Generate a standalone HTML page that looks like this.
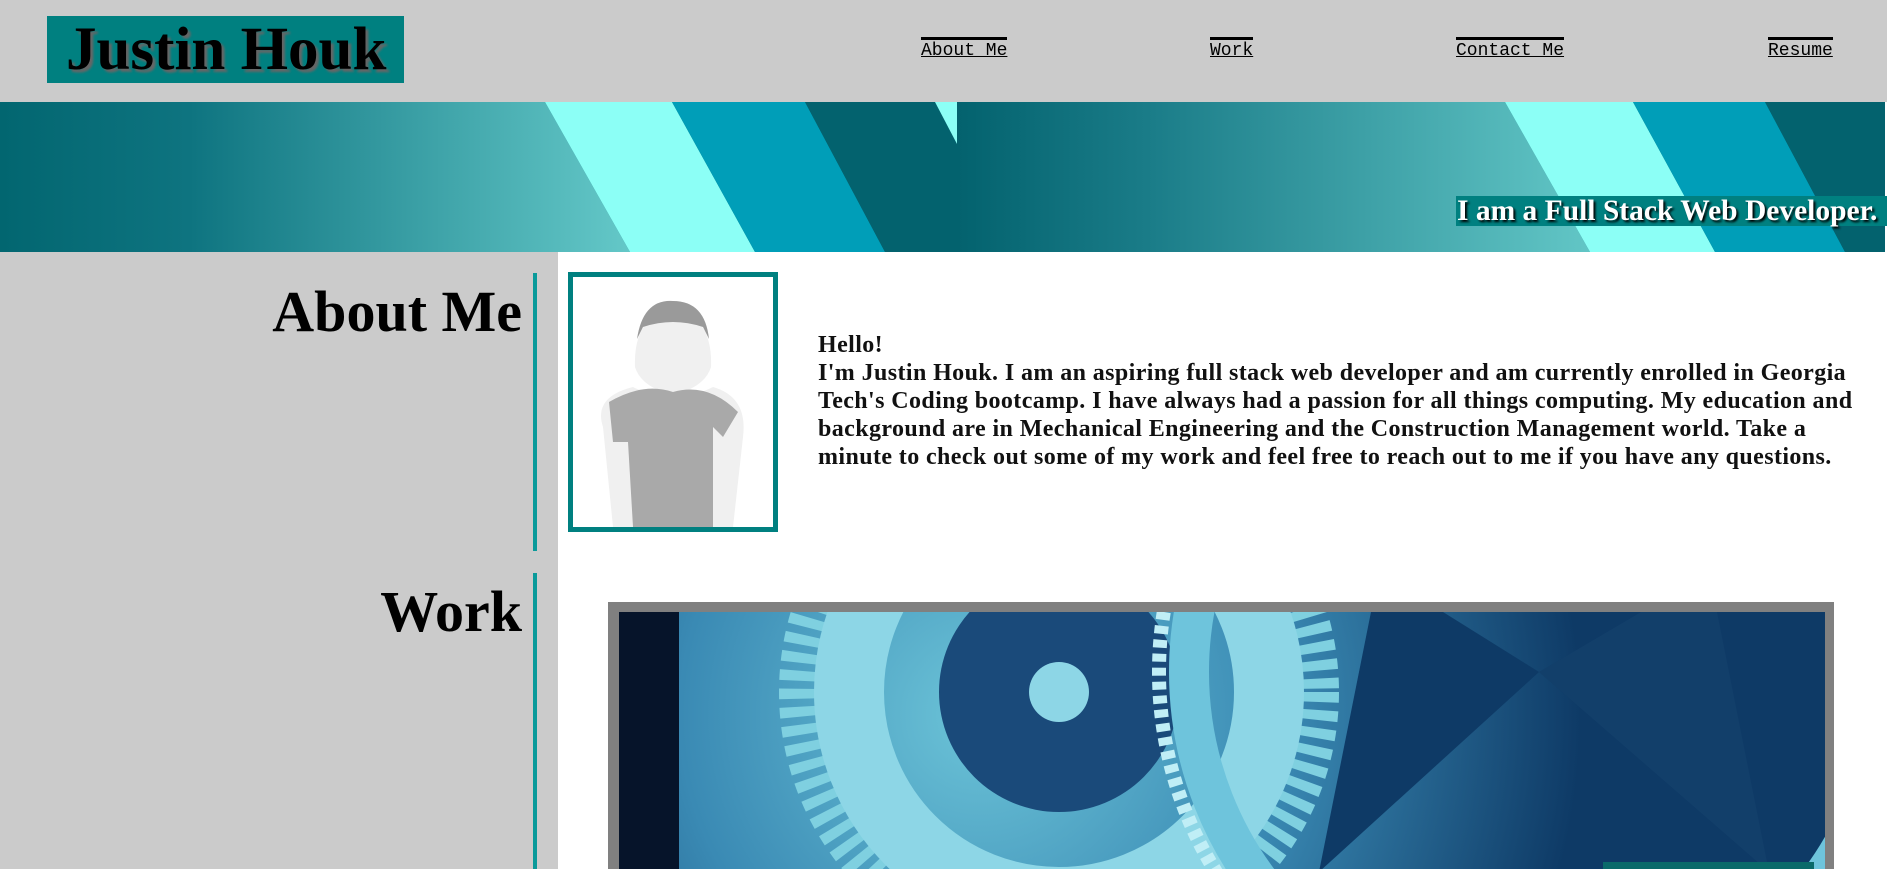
<!DOCTYPE html>
<html><head><meta charset="utf-8"><style>
*{margin:0;padding:0;box-sizing:border-box}
body{width:1887px;height:869px;overflow:hidden;background:#fff;position:relative;font-family:"Liberation Serif",serif}
.hdr{position:absolute;left:0;top:0;width:1887px;height:102px;background:#cbcbcb}
.logo{position:absolute;left:47px;top:16px;width:357px;height:67px;background:#008080;font-weight:bold;font-size:61px;line-height:67px;padding-left:19px;color:#000;text-shadow:3px 3px 2px #666;white-space:nowrap}
.nav{position:absolute;top:37px;font-family:"Liberation Mono",monospace;font-size:18px;line-height:20px;color:#000;text-decoration:underline;border-top:3px solid #000;padding-top:1px}
.ban{position:absolute;left:0;top:102px;width:1885px;height:150px;overflow:hidden}
.tag{position:absolute;left:1456px;top:196px;width:431px;height:30px;background:#008080;color:#fff;font-weight:bold;font-size:29.5px;line-height:30px;padding-left:1px;text-shadow:2px 2px 2px #000;white-space:nowrap}
.left{position:absolute;left:0;top:252px;width:558px;height:617px;background:#cbcbcb}
.vl{position:absolute;left:533px;width:4px;background:#0a9a9a}
.h{position:absolute;right:1365px;font-weight:bold;font-size:58px;line-height:58px;text-align:right}
.photo{position:absolute;left:568px;top:272px;width:210px;height:260px;border:5px solid #008080;background:#fff;overflow:hidden}
.txt{position:absolute;left:818px;top:331px;width:1050px;font-weight:bold;font-size:24px;letter-spacing:0.4px;line-height:28px;color:#111}
.frame{position:absolute;left:608px;top:602px;width:1226px;height:267px;background:#808080;padding:10px 9px 0 11px}
.gear{width:100%;height:100%;background:radial-gradient(circle at 30% 40%,#6cc4d8 0%,#3a8ab4 35%,#0e3a66 70%),#1e5a8a;overflow:hidden;position:relative}
</style></head><body>
<div class="hdr">
 <div class="logo">Justin Houk</div>
 <div class="nav" style="left:921px">About Me</div>
 <div class="nav" style="left:1210px">Work</div>
 <div class="nav" style="left:1456px">Contact Me</div>
 <div class="nav" style="left:1768px">Resume</div>
</div>
<div class="ban">
 <svg width="1885" height="150" style="position:absolute;left:0;top:0">
  <defs>
   <linearGradient id="g1" x1="0" x2="1"><stop offset="0" stop-color="#026670"/><stop offset=".3" stop-color="#0e7480"/><stop offset="1" stop-color="#64c8c8"/></linearGradient>
   <linearGradient id="g2" x1="0" x2="1"><stop offset="0" stop-color="#03626e"/><stop offset=".3" stop-color="#1a7c88"/><stop offset="1" stop-color="#62c6c6"/></linearGradient>
  </defs>
  <rect x="0" y="0" width="1885" height="150" fill="#03626e"/>
  <polygon points="0,0 545,0 630,150 0,150" fill="url(#g1)"/>
  <polygon points="545,0 672,0 755,150 630,150" fill="#8cfff6"/>
  <polygon points="672,0 805,0 885,150 755,150" fill="#009eb8"/>
  <polygon points="805,0 957,0 957,150 885,150" fill="#03626e"/>
  <polygon points="935,0 957,0 957,42" fill="#8cfff6"/>
  <polygon points="957,0 1505,0 1590,150 957,150" fill="url(#g2)"/>
  <polygon points="1505,0 1633,0 1715,150 1590,150" fill="#8cfff6"/>
  <polygon points="1633,0 1765,0 1845,150 1715,150" fill="#009eb8"/>
  <polygon points="1765,0 1885,0 1885,150 1845,150" fill="#03626e"/>
 </svg>
</div>
<div class="tag">I am a Full Stack Web Developer.</div>
<div class="left"></div>
<div class="vl" style="top:273px;height:278px"></div>
<div class="vl" style="top:573px;height:296px"></div>
<div class="h" style="top:283px">About Me</div>
<div class="h" style="top:583px">Work</div>
<div class="photo">
 <svg width="200" height="250" viewBox="0 0 200 250">
  <path d="M62 90 Q60 40 100 30 Q140 40 138 90 Q132 110 100 118 Q68 110 62 90Z" fill="#f0f0f0"/>
  <path d="M64 62 Q70 22 100 24 Q132 24 136 62 L130 50 Q100 40 70 50Z" fill="#9a9a9a"/>
  <path d="M40 250 L30 150 Q20 120 60 110 Q100 130 140 110 Q175 120 170 160 L160 250Z" fill="#f0f0f0"/>
  <path d="M36 125 Q70 105 100 115 Q135 105 165 135 L150 160 L140 150 L140 250 L60 250 L55 165 L40 165Z" fill="#a9a9a9"/>
 </svg>
</div>
<div class="txt">Hello!<br>I'm Justin Houk. I am an aspiring full stack web developer and am currently enrolled in Georgia Tech's Coding bootcamp. I have always had a passion for all things computing. My education and background are in Mechanical Engineering and the Construction Management world. Take a minute to check out some of my work and feel free to reach out to me if you have any questions.</div>
<div class="frame"><div class="gear">
 <svg width="1206" height="260" style="position:absolute;left:0;top:0">
  <circle cx="440" cy="80" r="260" fill="none" stroke="#7fd0e0" stroke-width="40" stroke-dasharray="10 8"/>
  <circle cx="440" cy="80" r="210" fill="none" stroke="#8dd6e6" stroke-width="70"/>
  <circle cx="440" cy="80" r="120" fill="#1a4a7a"/>
  <circle cx="440" cy="80" r="30" fill="#8dd6e6"/>
  <circle cx="920" cy="60" r="380" fill="none" stroke="#c0eef6" stroke-width="14" stroke-dasharray="8 6"/>
  <circle cx="920" cy="60" r="350" fill="none" stroke="#6ec4dc" stroke-width="40"/>
  <path d="M920 60 L760 -40 L700 260 Z" fill="#0e3a66"/>
  <path d="M920 60 L1090 -40 L1150 260 Z" fill="#123f6a"/>
  <rect x="0" y="0" width="60" height="270" fill="#06142a"/>
 </svg>
 <div style="position:absolute;left:984px;top:250px;width:211px;height:20px;background:#0a6a6a"></div>
</div></div>
</body></html>
